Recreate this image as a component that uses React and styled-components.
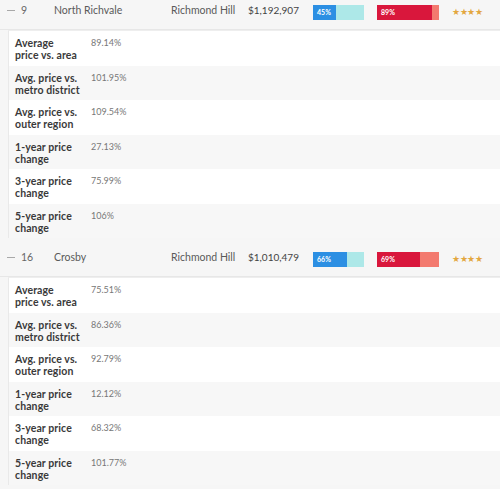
import styled, { createGlobalStyle } from "styled-components";

const GlobalStyle = createGlobalStyle`
  body {
    margin: 0;
    background: #f6f6f6;
    font-family: "Lato", "Open Sans", sans-serif;
  }
`;

const StyledList = styled.div`
  display: flex;
  flex-direction: column;
  margin-top: -9px;
`;

const StyledHeaderRow = styled.div`
  display: grid;
  grid-template-columns: 47px 117px 77px 65px 64px 75px auto;
  align-items: center;
  height: 38px;
  padding-left: 7px;
  background: #f6f6f6;
  border-bottom: 1px solid #e7e7e7;
  font-size: 10.5px;
  color: #5a5a5a;
`;

const StyledRank = styled.div`
  display: flex;
  align-items: center;
  gap: 6px;
  color: #666;
`;

const StyledDash = styled.span`
  display: inline-block;
  width: 8px;
  height: 1px;
  background: #a8a8a8;
`;

const StyledPrice = styled.div`
  font-size: 10px;
  color: #444;
`;

const StyledBar = styled.div`
  display: flex;
  width: ${(p) => p.width}px;
  height: 15px;
  margin-top: 4px;
  background: ${(p) => p.track};
`;

const StyledFill = styled.div`
  display: flex;
  align-items: center;
  padding-left: 4px;
  box-sizing: border-box;
  background: ${(p) => p.color};
  color: #fff;
  font-size: 7px;
  font-weight: 700;
`;

const StyledStars = styled.div`
  color: #e3a73f;
  font-size: 9px;
  letter-spacing: -0.3px;
  margin-top: 2px;
`;

const StyledPanel = styled.div`
  display: flex;
  flex-direction: column;
  margin-left: 8px;
  background: #fff;
  border-left: 1px solid #e9e9e9;
  border-top: 1px solid #eeeeee;
`;

const StyledDetailRow = styled.div`
  display: grid;
  grid-template-columns: 76px auto;
  padding: 6px 0 4.5px 6px;
  background: ${(p) => (p.striped ? "#f7f7f7" : "#fff")};
`;

const StyledLabel = styled.div`
  font-size: 10.5px;
  font-weight: 700;
  line-height: 12px;
  letter-spacing: 0.1px;
  color: #3a3a3a;
  white-space: pre-line;
`;

const StyledValue = styled.div`
  font-size: 9px;
  line-height: 12px;
  color: #777;
`;

const neighbourhoods = [
  {
    rank: 9,
    name: "North Richvale",
    city: "Richmond Hill",
    price: "$1,192,907",
    blue: 45,
    red: 89,
    stats: ["89.14%", "101.95%", "109.54%", "27.13%", "75.99%", "106%"],
  },
  {
    rank: 16,
    name: "Crosby",
    city: "Richmond Hill",
    price: "$1,010,479",
    blue: 66,
    red: 69,
    stats: ["75.51%", "86.36%", "92.79%", "12.12%", "68.32%", "101.77%"],
  },
];

const labels = [
  "Average\nprice vs. area",
  "Avg. price vs.\nmetro district",
  "Avg. price vs.\nouter region",
  "1-year price\nchange",
  "3-year price\nchange",
  "5-year price\nchange",
];

function ScoreBar({ value, width, color, track }) {
  return (
    <StyledBar width={width} track={track}>
      <StyledFill color={color} style={{ width: `${value}%` }}>
        {value}%
      </StyledFill>
    </StyledBar>
  );
}

function HeaderRow({ item }) {
  return (
    <StyledHeaderRow>
      <StyledRank>
        <StyledDash />
        {item.rank}
      </StyledRank>
      <div>{item.name}</div>
      <div>{item.city}</div>
      <StyledPrice>{item.price}</StyledPrice>
      <ScoreBar value={item.blue} width={51} color="#2c8fe3" track="#ade8e8" />
      <ScoreBar value={item.red} width={62} color="#d9173c" track="#f37a6f" />
      <StyledStars>★★★★</StyledStars>
    </StyledHeaderRow>
  );
}

function DetailPanel({ stats }) {
  return (
    <StyledPanel>
      {labels.map((label, i) => (
        <StyledDetailRow key={label} striped={i % 2 === 1}>
          <StyledLabel>{label}</StyledLabel>
          <StyledValue>{stats[i]}</StyledValue>
        </StyledDetailRow>
      ))}
    </StyledPanel>
  );
}

export default function App() {
  return (
    <>
      <GlobalStyle />
      <StyledList>
        {neighbourhoods.map((item) => (
          <div key={item.rank}>
            <HeaderRow item={item} />
            <DetailPanel stats={item.stats} />
          </div>
        ))}
      </StyledList>
    </>
  );
}
